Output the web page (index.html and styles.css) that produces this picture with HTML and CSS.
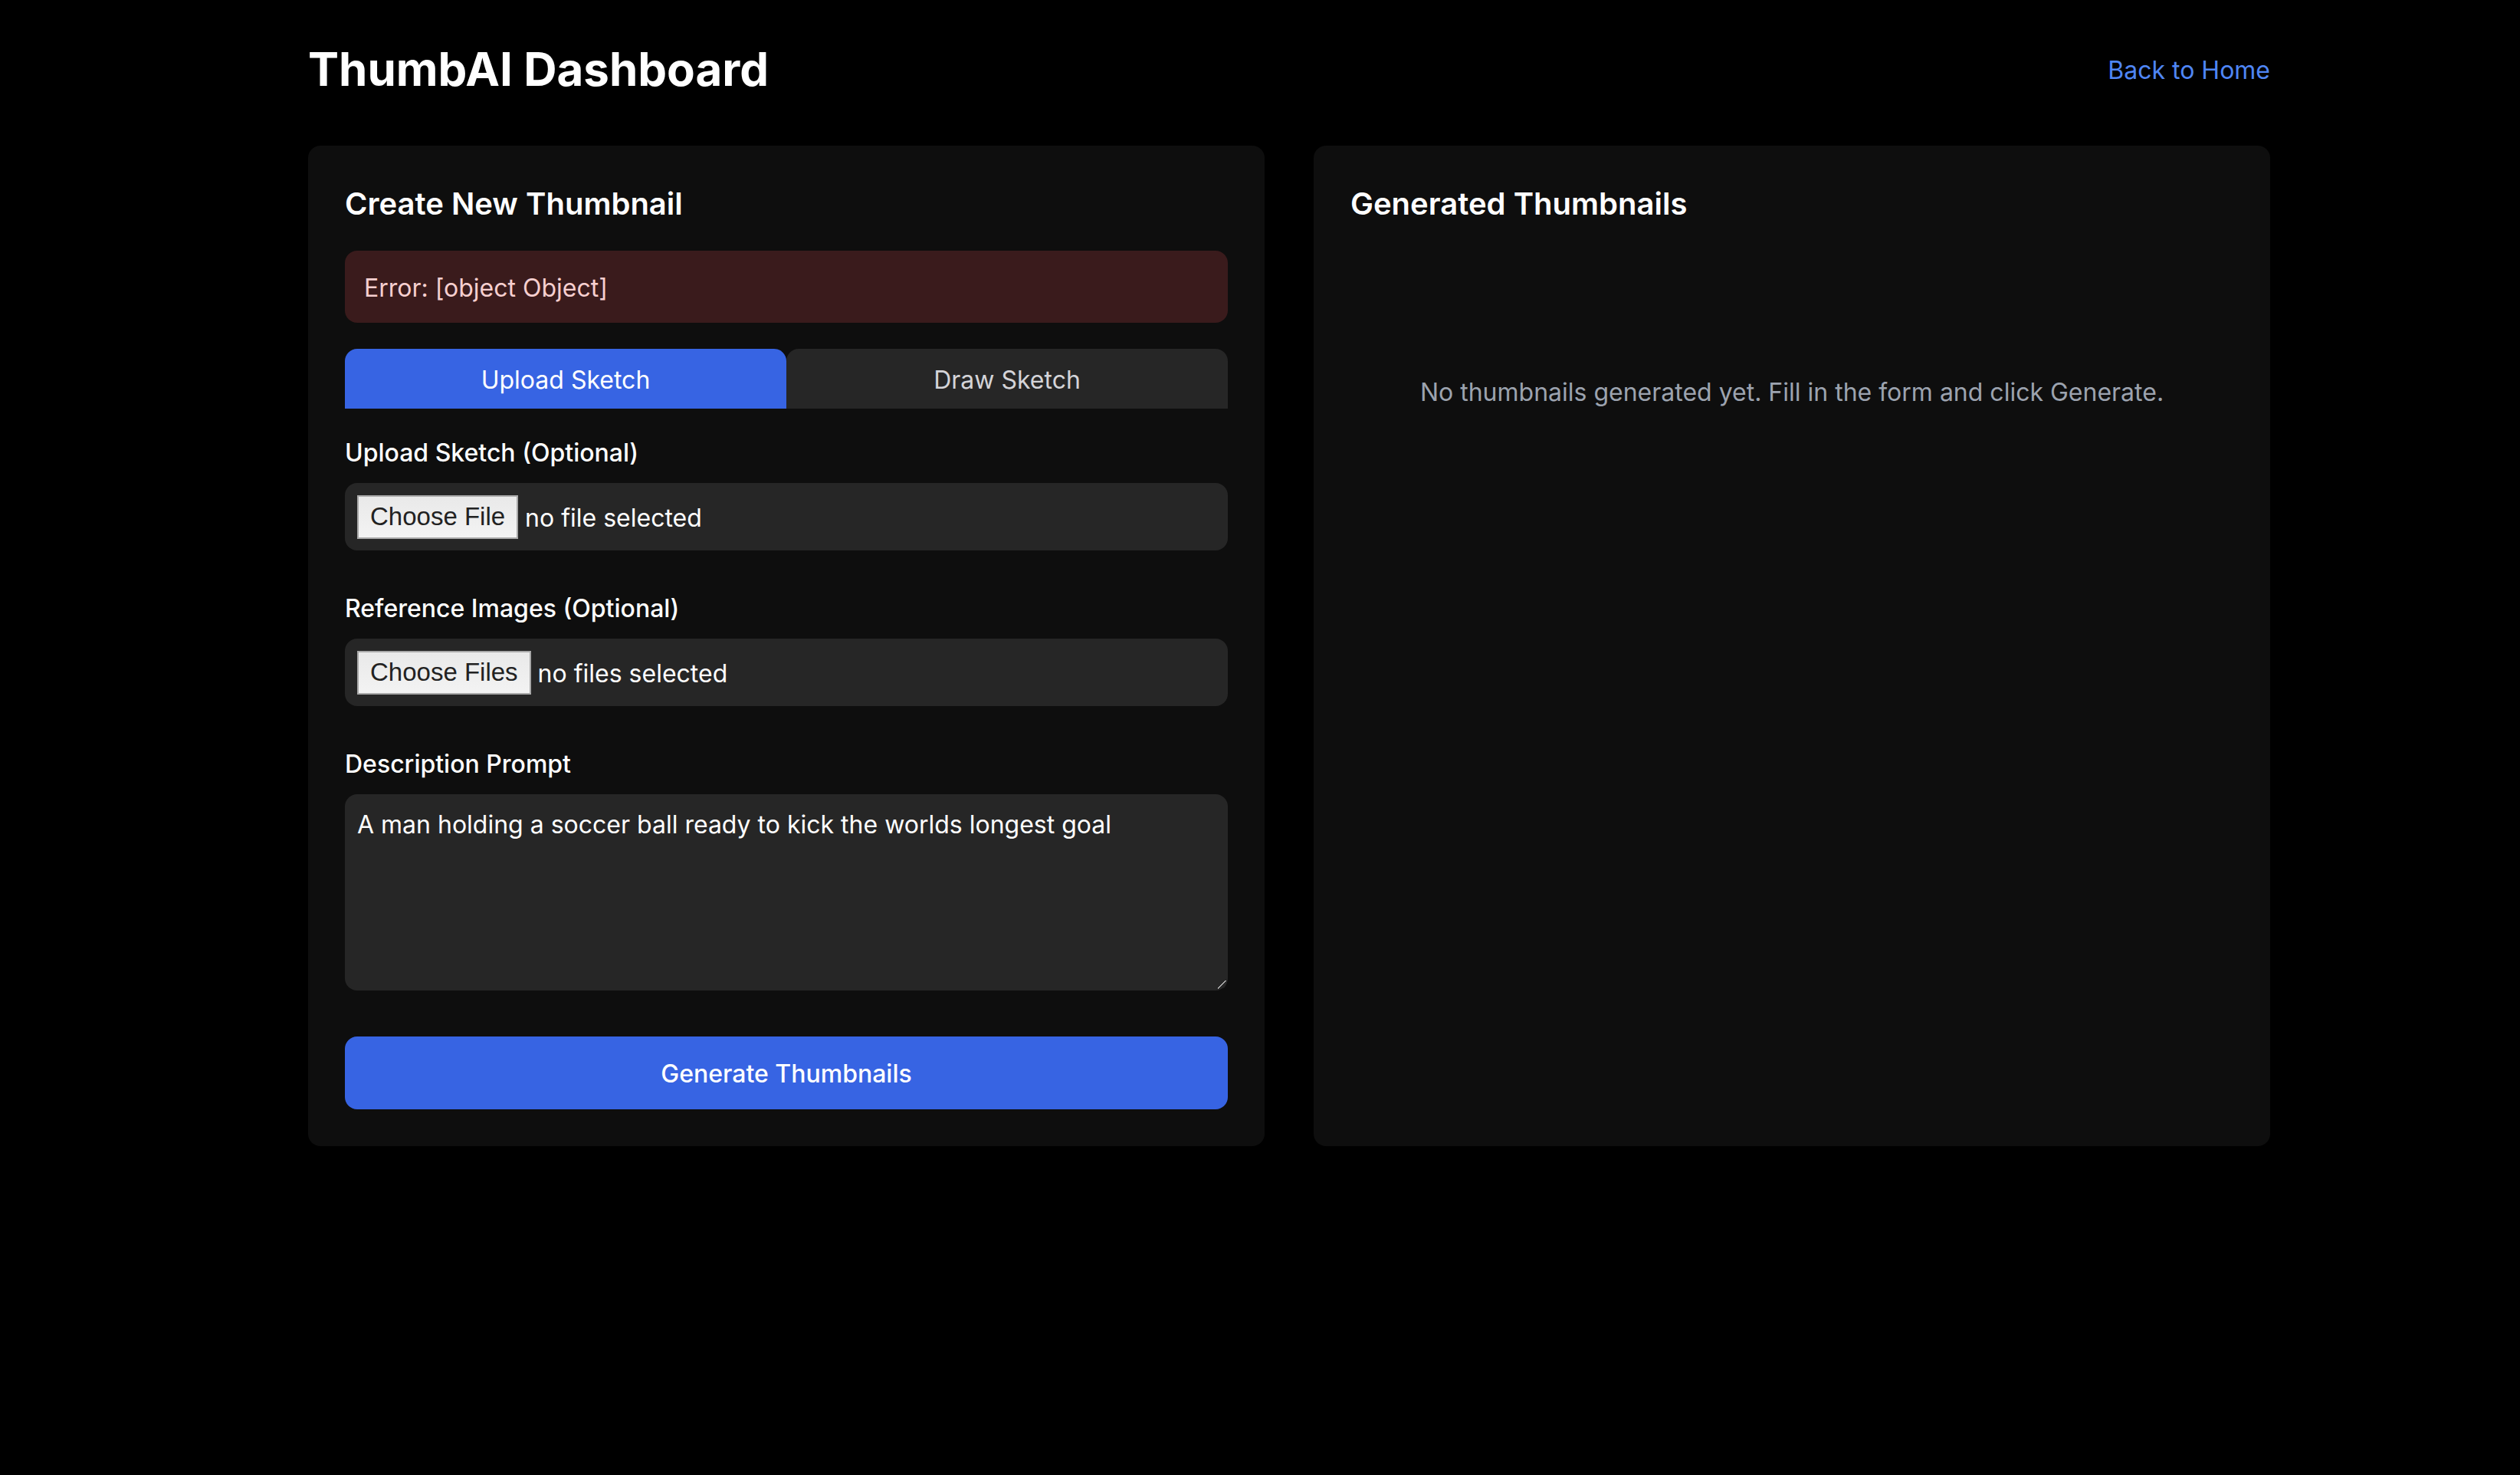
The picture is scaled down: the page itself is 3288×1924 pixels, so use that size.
FILE: index.html
```html
<!DOCTYPE html>
<html lang="en">
<head>
<meta charset="utf-8">
<title>ThumbAI Dashboard</title>
<link rel="stylesheet" href="styles.css">
</head>
<body>
<div class="page">
  <header class="topbar">
    <h1 class="brand">ThumbAI Dashboard</h1>
    <a class="home-link" href="#">Back to Home</a>
  </header>
  <main class="grid">
    <section class="card">
      <h2 class="card-title">Create New Thumbnail</h2>
      <div class="error">Error: [object Object]</div>
      <div class="tabs">
        <button class="tab tab-active">Upload Sketch</button>
        <button class="tab">Draw Sketch</button>
      </div>
      <div class="field">
        <label class="label">Upload Sketch (Optional)</label>
        <div class="file-box">
          <span class="file-btn">Choose File</span>
          <span class="file-name">no file selected</span>
        </div>
      </div>
      <div class="field">
        <label class="label">Reference Images (Optional)</label>
        <div class="file-box">
          <span class="file-btn">Choose Files</span>
          <span class="file-name">no files selected</span>
        </div>
      </div>
      <div class="field">
        <label class="label">Description Prompt</label>
        <textarea class="prompt">A man holding a soccer ball ready to kick the worlds longest goal</textarea>
      </div>
      <button class="generate">Generate Thumbnails</button>
    </section>
    <section class="card">
      <h2 class="card-title">Generated Thumbnails</h2>
      <p class="empty">No thumbnails generated yet. Fill in the form and click Generate.</p>
    </section>
  </main>
</div>
</body>
</html>
```
FILE: styles.css
```css
* { box-sizing: border-box; }
html, body { margin: 0; padding: 0; }
body {
  background: #000;
  color: #fff;
  font-family: Inter, "Noto Sans", sans-serif;
  font-size: 32px;
  line-height: 48px;
}
.page {
  width: 2560px;
  margin-left: 402px;
}
.topbar {
  height: 190px;
  display: flex;
  align-items: center;
  justify-content: space-between;
  padding-bottom: 10px;
}
.brand {
  margin: 0;
  font-size: 60px;
  line-height: 76px;
  font-weight: 700;
}
.home-link {
  color: #4f86f5;
  text-decoration: none;
  font-size: 32px;
  padding-top: 4px;
}
.grid {
  display: grid;
  grid-template-columns: 1fr 1fr;
  gap: 64px;
}
.card {
  background: #0e0e0e;
  border-radius: 16px;
  padding: 48px 48px 48px;
}
.card-title {
  margin: 0 0 33px;
  font-size: 40px;
  line-height: 56px;
  font-weight: 600;
}
.error {
  background: #3a1b1c;
  color: #f6cfcf;
  border-radius: 16px;
  padding: 24px 25px 20px;
  line-height: 50px;
  margin-bottom: 34px;
}
.tabs {
  display: flex;
  margin-bottom: 32px;
}
.tab {
  flex: 1;
  border: 0;
  font: inherit;
  line-height: 50px;
  padding: 16px 0 12px;
  background: #262626;
  color: #d4d4d8;
  border-radius: 16px 16px 0 0;
}
.tab-active {
  background: #3764e3;
  color: #fff;
}
.field { margin-bottom: 50px; }
.field:last-of-type { margin-bottom: 60px; }
.label {
  display: block;
  font-weight: 500;
  padding-top: 2px;
  margin-bottom: 15px;
}
.file-box {
  height: 88px;
  background: #262626;
  border-radius: 16px;
  display: flex;
  align-items: center;
  padding: 0 16px;
}
.file-btn {
  height: 57px;
  display: flex;
  align-items: center;
  padding: 0 15px;
  border: 2px solid #a9a9a9;
  background: linear-gradient(#e9e9e9, #f3f3f3);
  color: #222;
  font-family: "Liberation Sans", Arial, sans-serif;
  font-size: 33px;
}
.file-name {
  margin-left: 9px;
  padding-top: 4px;
}
.prompt {
  display: block;
  width: 100%;
  height: 256px;
  background:
    linear-gradient(135deg, transparent 40%, #b0b0b0 40% 47%, transparent 47% 68%, #b0b0b0 68% 75%, transparent 75%) no-repeat right 1px bottom 1px / 12px 12px,
    #262626;
  color: #fff;
  border: 0;
  border-radius: 16px;
  padding: 16px;
  font: inherit;
  resize: none;
  outline: none;
}
.generate {
  display: block;
  width: 100%;
  height: 95px;
  border: 0;
  border-radius: 16px;
  background: #3764e3;
  color: #fff;
  font: inherit;
  font-weight: 500;
  padding-top: 4px;
}
.empty {
  margin: 194px 0 0;
  text-align: center;
  color: #9ca3af;
}
```
